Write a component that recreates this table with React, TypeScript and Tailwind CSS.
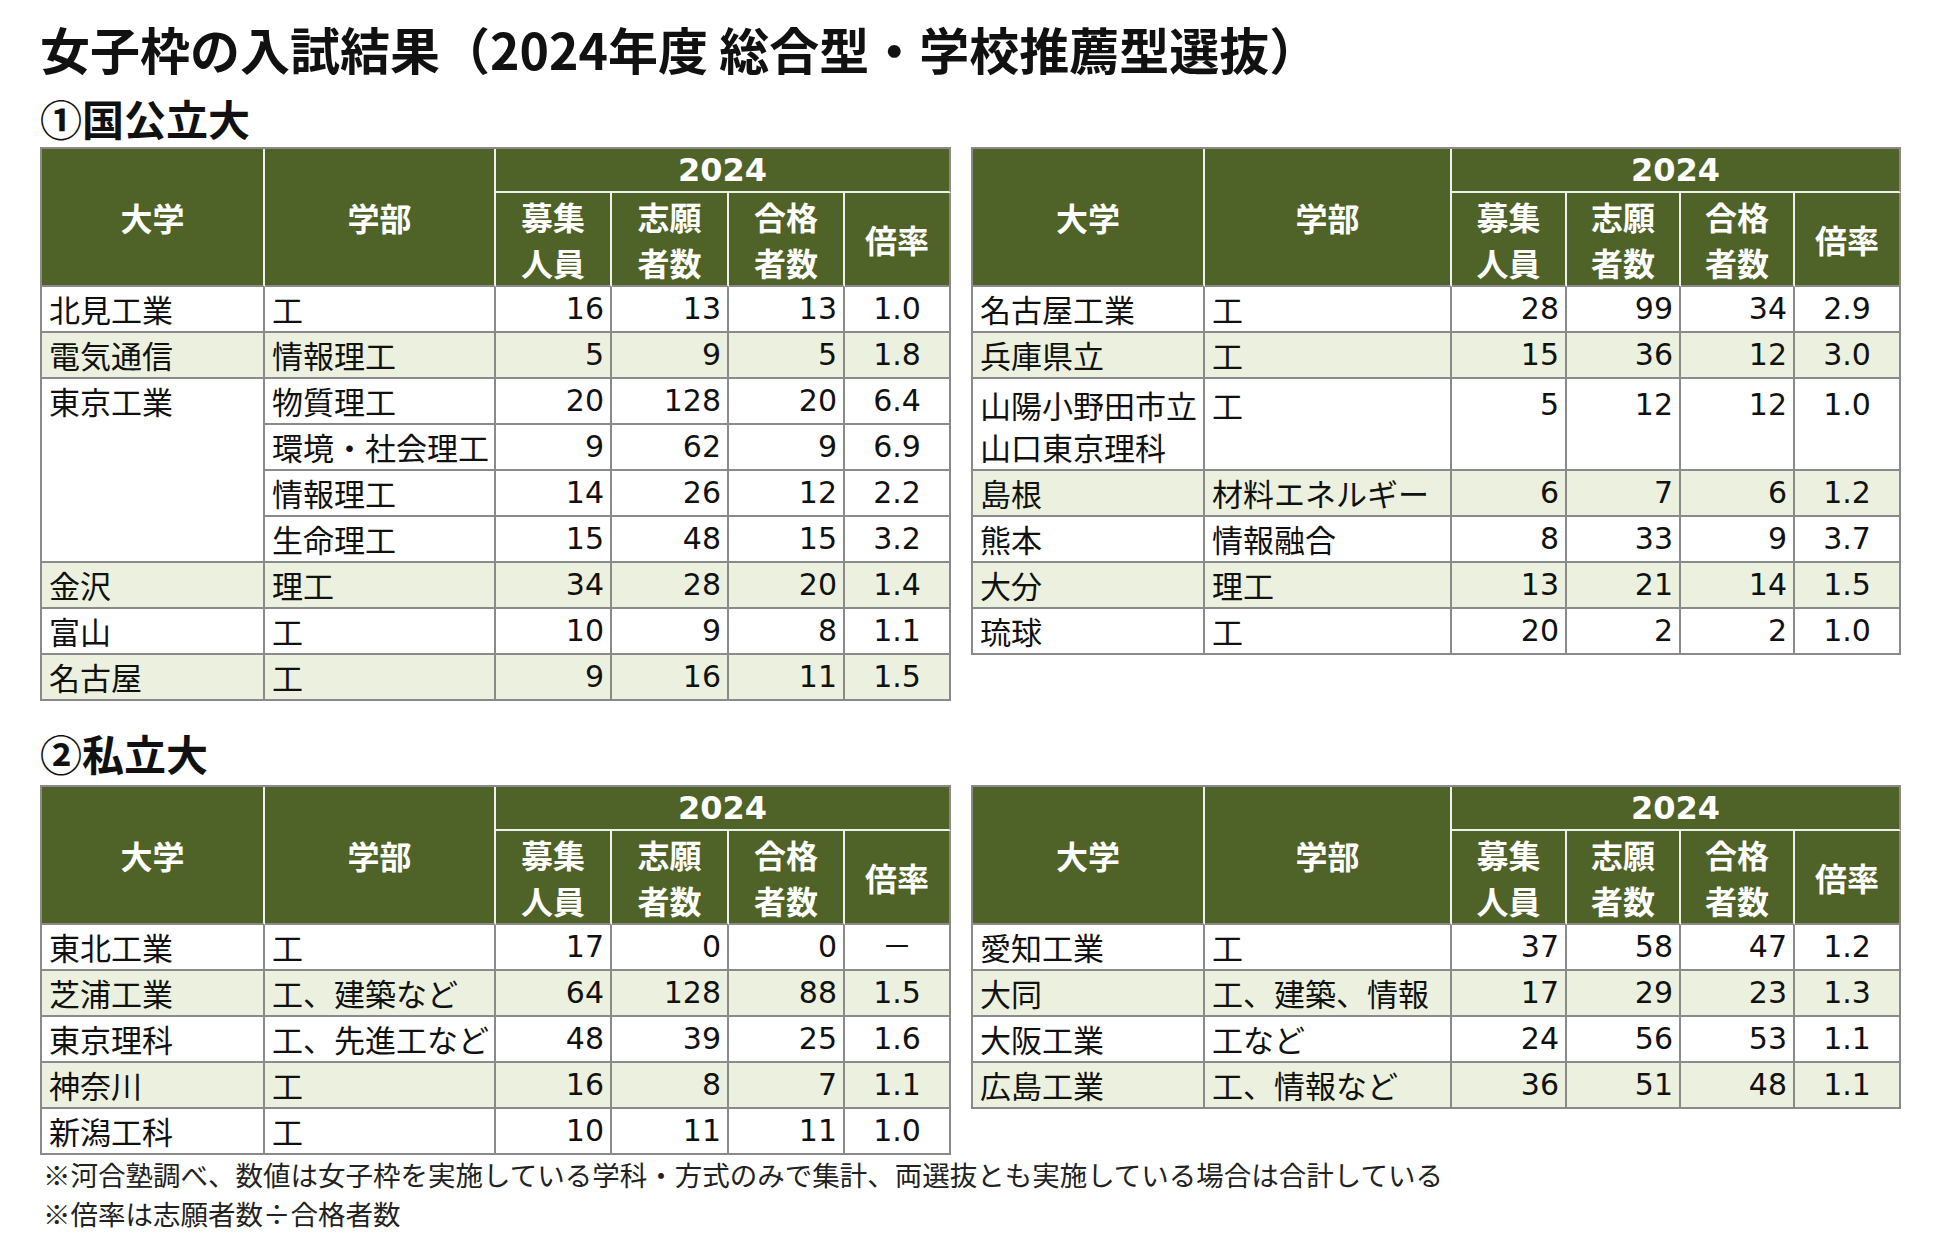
import React from 'react';

type Row = {
  uni?: string[];
  span?: number;
  dept: string;
  vals: [string, string, string, string];
  shade?: boolean;
  tall?: boolean;
};

const kokkouritsuLeft: Row[] = [
  { uni: ['北見工業'], dept: '工', vals: ['16', '13', '13', '1.0'] },
  { uni: ['電気通信'], dept: '情報理工', vals: ['5', '9', '5', '1.8'], shade: true },
  { uni: ['東京工業'], span: 4, dept: '物質理工', vals: ['20', '128', '20', '6.4'] },
  { dept: '環境・社会理工', vals: ['9', '62', '9', '6.9'] },
  { dept: '情報理工', vals: ['14', '26', '12', '2.2'] },
  { dept: '生命理工', vals: ['15', '48', '15', '3.2'] },
  { uni: ['金沢'], dept: '理工', vals: ['34', '28', '20', '1.4'], shade: true },
  { uni: ['富山'], dept: '工', vals: ['10', '9', '8', '1.1'] },
  { uni: ['名古屋'], dept: '工', vals: ['9', '16', '11', '1.5'], shade: true },
];

const kokkouritsuRight: Row[] = [
  { uni: ['名古屋工業'], dept: '工', vals: ['28', '99', '34', '2.9'] },
  { uni: ['兵庫県立'], dept: '工', vals: ['15', '36', '12', '3.0'], shade: true },
  { uni: ['山陽小野田市立', '山口東京理科'], dept: '工', vals: ['5', '12', '12', '1.0'], tall: true },
  { uni: ['島根'], dept: '材料エネルギー', vals: ['6', '7', '6', '1.2'], shade: true },
  { uni: ['熊本'], dept: '情報融合', vals: ['8', '33', '9', '3.7'] },
  { uni: ['大分'], dept: '理工', vals: ['13', '21', '14', '1.5'], shade: true },
  { uni: ['琉球'], dept: '工', vals: ['20', '2', '2', '1.0'] },
];

const shiritsuLeft: Row[] = [
  { uni: ['東北工業'], dept: '工', vals: ['17', '0', '0', '－'] },
  { uni: ['芝浦工業'], dept: '工、建築など', vals: ['64', '128', '88', '1.5'], shade: true },
  { uni: ['東京理科'], dept: '工、先進工など', vals: ['48', '39', '25', '1.6'] },
  { uni: ['神奈川'], dept: '工', vals: ['16', '8', '7', '1.1'], shade: true },
  { uni: ['新潟工科'], dept: '工', vals: ['10', '11', '11', '1.0'] },
];

const shiritsuRight: Row[] = [
  { uni: ['愛知工業'], dept: '工', vals: ['37', '58', '47', '1.2'] },
  { uni: ['大同'], dept: '工、建築、情報', vals: ['17', '29', '23', '1.3'], shade: true },
  { uni: ['大阪工業'], dept: '工など', vals: ['24', '56', '53', '1.1'] },
  { uni: ['広島工業'], dept: '工、情報など', vals: ['36', '51', '48', '1.1'], shade: true },
];

const leftCols = ['w-[223px]', 'w-[231px]', 'w-[116px]', 'w-[117px]', 'w-[116px]', 'w-[106px]'];
const rightCols = ['w-[232px]', 'w-[247px]', 'w-[115px]', 'w-[114px]', 'w-[114px]', 'w-[106px]'];

const GRAY = 'border-[#8a8a8a]';
const num = "font-['DejaVu_Sans','Noto_Sans_CJK_JP',sans-serif] text-[30px]";

const ResultTable: React.FC<{ cols: string[]; rows: Row[]; width: string }> = ({ cols, rows, width }) => {
  const head = 'bg-[#4f6228] text-white font-bold text-[32px] text-center align-middle border-b-2 border-r-2';
  return (
    <table className={`${width} table-fixed border-separate border-spacing-0 border-t-2 border-l-2 ${GRAY}`}>
      <colgroup>
        {cols.map((c, i) => (
          <col key={i} className={c} />
        ))}
      </colgroup>
      <thead>
        <tr className="h-[44px]">
          <th rowSpan={2} className={`${head} border-r-[#f0f0ea] border-b-[#8a8a8a] leading-[40px]`}>
            大学
          </th>
          <th rowSpan={2} className={`${head} border-r-[#f0f0ea] border-b-[#8a8a8a] leading-[40px]`}>
            学部
          </th>
          <th
            colSpan={4}
            className={`${head} border-r-[#8a8a8a] border-b-[#f0f0ea] font-['DejaVu_Sans',sans-serif] text-[31px] leading-[40px]`}
          >
            2024
          </th>
        </tr>
        <tr className="h-[92px]">
          {['募集|人員', '志願|者数', '合格|者数', '倍率'].map((h, i) => (
            <th
              key={h}
              className={`${head} border-b-[#8a8a8a] leading-[46px] ${i === 3 ? 'border-r-[#8a8a8a]' : 'border-r-[#f0f0ea]'}`}
            >
              {h.split('|').map((l) => (
                <div key={l}>{l}</div>
              ))}
            </th>
          ))}
        </tr>
      </thead>
      <tbody>
        {rows.map((r, i) => {
          const bg = r.shade ? 'bg-[#ebf1de]' : 'bg-white';
          const line = r.tall ? 'pt-[5px] leading-[42px]' : 'leading-[44px]';
          const cell = `${bg} ${line} align-top border-r-2 border-b-2 ${GRAY} whitespace-nowrap`;
          return (
            <tr key={i} className={r.tall ? 'h-[92px]' : 'h-[46px]'}>
              {r.uni && (
                <td rowSpan={r.span ?? 1} className={`${cell} pl-[7px] text-[31px]`}>
                  {r.uni.map((u) => (
                    <div key={u}>{u}</div>
                  ))}
                </td>
              )}
              <td className={`${cell} pl-[7px] text-[31px]`}>{r.dept}</td>
              {r.vals.map((v, j) => (
                <td key={j} className={`${cell} ${num} ${j === 3 ? 'text-center' : 'text-right pr-[6px]'}`}>
                  {v}
                </td>
              ))}
            </tr>
          );
        })}
      </tbody>
    </table>
  );
};

export default function App() {
  return (
    <div className="w-[1950px] h-[1242px] bg-white text-[#111] font-['Noto_Sans_CJK_JP',sans-serif] pl-10 pt-[19px] flex flex-col">
      <h1 className="text-[50px] font-bold leading-[58px]">女子枠の入試結果（2024年度 総合型・学校推薦型選抜）</h1>

      <h2 className="mt-[17px] text-[42px] font-bold leading-[48px]">①国公立大</h2>
      <div className="mt-[5px] flex items-start gap-[20px]">
        <ResultTable cols={leftCols} rows={kokkouritsuLeft} width="w-[909px]" />
        <ResultTable cols={rightCols} rows={kokkouritsuRight} width="w-[928px]" />
      </div>

      <h2 className="mt-[28px] text-[42px] font-bold leading-[48px]">②私立大</h2>
      <div className="mt-[8px] flex items-start gap-[20px]">
        <ResultTable cols={leftCols} rows={shiritsuLeft} width="w-[909px]" />
        <ResultTable cols={rightCols} rows={shiritsuRight} width="w-[928px]" />
      </div>

      <div className="mt-0 pl-[3px] text-[27.5px] leading-[39px] text-[#222]">
        <p>※河合塾調べ、数値は女子枠を実施している学科・方式のみで集計、両選抜とも実施している場合は合計している</p>
        <p>※倍率は志願者数÷合格者数</p>
      </div>
    </div>
  );
}
